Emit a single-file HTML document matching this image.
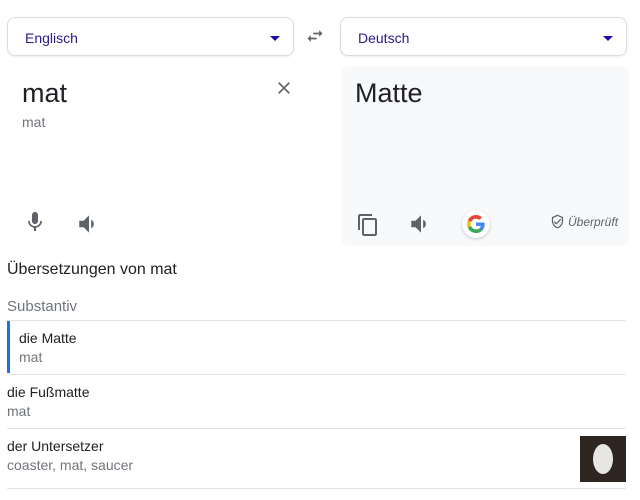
<!DOCTYPE html>
<html><head><meta charset="utf-8"><style>
*{margin:0;padding:0;box-sizing:border-box}
body{width:640px;height:500px;background:#fff;font-family:"Liberation Sans",Arial,sans-serif;position:relative;overflow:hidden;color:#202124}
.a{position:absolute}
.sel{position:absolute;top:17px;height:39px;border:1px solid #dadce0;border-radius:8px;box-shadow:0 1px 2px rgba(0,0,0,.08);font-size:14px;color:#2a1a8a;padding:12px 0 0 17px}
.tri{position:absolute;right:13px;top:18px;width:0;height:0;border-left:5px solid transparent;border-right:5px solid transparent;border-top:5px solid #1a0dab}
.line{position:absolute;left:7px;width:619px;height:1px;background:#e4e4e4}
.t1{font-size:14px;color:#202124}
.t2{font-size:14px;color:#70757a}
</style></head><body>
<div class="sel" style="left:7px;width:287px">Englisch<div class="tri"></div></div>
<div class="sel" style="left:340px;width:287px">Deutsch<div class="tri"></div></div>
<svg class="a" style="left:305px;top:26px" width="20" height="20" viewBox="0 0 24 24" fill="#5f6368"><path d="M6.99 11L3 15l3.99 4v-3H14v-2H6.99v-3zM21 9l-3.99-4v3H10v2h7.01v3L21 9z"/></svg>
<div class="a" style="left:22px;top:78px;font-size:27px;color:#202124">mat</div>
<div class="a t2" style="left:22px;top:114px">mat</div>
<svg class="a" style="left:274px;top:78px" width="20" height="20" viewBox="0 0 24 24" fill="#5f6368"><path d="M19 6.41L17.59 5 12 10.59 6.41 5 5 6.41 10.59 12 5 17.59 6.41 19 12 13.41 17.59 19 19 17.59 13.41 12z"/></svg>
<svg class="a" style="left:23px;top:210px" width="24" height="24" viewBox="0 0 24 24" fill="#5f6368"><path d="M12 14c1.66 0 3-1.34 3-3V5c0-1.66-1.34-3-3-3S9 3.34 9 5v6c0 1.66 1.34 3 3 3zm5.3-3c0 3-2.54 5.1-5.3 5.1S6.7 14 6.7 11H5c0 3.41 2.72 6.23 6 6.72V21h2v-3.28c3.28-.48 6-3.3 6-6.72h-1.7z"/></svg>
<svg class="a" style="left:76px;top:211px" width="26" height="26" viewBox="0 0 24 24" fill="#5f6368"><path d="M3 9v6h4l5 5V4L7 9H3zm13.5 3c0-1.77-1.02-3.29-2.5-4.03v8.05c1.48-.73 2.5-2.25 2.5-4.02z"/></svg>
<div class="a" style="left:341px;top:66px;width:288px;height:180px;background:#f8f9fa;border-radius:8px"></div>
<div class="a" style="left:355px;top:78px;font-size:27px;color:#202124">Matte</div>
<svg class="a" style="left:356px;top:213px" width="24" height="24" viewBox="0 0 24 24" fill="#5f6368"><path d="M16 1H4c-1.1 0-2 .9-2 2v14h2V3h12V1zm3 4H8c-1.1 0-2 .9-2 2v14c0 1.1.9 2 2 2h11c1.1 0 2-.9 2-2V7c0-1.1-.9-2-2-2zm0 16H8V7h11v14z"/></svg>
<svg class="a" style="left:408px;top:211px" width="26" height="26" viewBox="0 0 24 24" fill="#5f6368"><path d="M3 9v6h4l5 5V4L7 9H3zm13.5 3c0-1.77-1.02-3.29-2.5-4.03v8.05c1.48-.73 2.5-2.25 2.5-4.02z"/></svg>
<div class="a" style="left:462px;top:210px;width:28px;height:28px;border-radius:50%;background:#fff;box-shadow:0 1px 3px rgba(0,0,0,.2)"></div>
<svg class="a" style="left:467px;top:215px" width="18" height="18" viewBox="0 0 48 48"><path fill="#EA4335" d="M24 9.5c3.54 0 6.710 1.22 9.21 3.6l6.85-6.85C35.9 2.38 30.470 0 24 0 14.62 0 6.51 5.38 2.56 13.22l7.98 6.19C12.43 13.72 17.74 9.5 24 9.5z"/><path fill="#4285F4" d="M46.98 24.55c0-1.57-.15-3.09-.38-4.55H24v9.02h12.940c-.58 2.96-2.26 5.48-4.78 7.18l7.73 6c4.51-4.18 7.09-10.36 7.09-17.65z"/><path fill="#FBBC05" d="M10.53 28.59c-.48-1.45-.76-2.99-.76-4.59s.27-3.14.76-4.59l-7.98-6.19C.92 16.46 0 20.12 0 24c0 3.88.92 7.54 2.56 10.78l7.97-6.19z"/><path fill="#34A853" d="M24 48c6.48 0 11.930-2.13 15.89-5.81l-7.73-6c-2.15 1.45-4.92 2.3-8.16 2.3-6.26 0-11.57-4.22-13.47-9.91l-7.98 6.19C6.51 42.62 14.62 48 24 48z"/></svg>
<svg class="a" style="left:550px;top:214px" width="15" height="15" viewBox="0 0 24 24" fill="#5f6368"><path d="M12 1L3 5v6c0 5.55 3.84 10.74 9 12 5.16-1.26 9-6.45 9-12V5l-9-4zm7 10c0 4.52-2.98 8.69-7 9.930-4.02-1.24-7-5.41-7-9.93V6.3l7-3.11 7 3.11V11zm-11.59.59L6 13l4 4 8-8-1.41-1.42L10 14.17z"/></svg>
<div class="a" style="left:568px;top:215px;font-size:12px;font-style:italic;color:#5f6368">Überprüft</div>
<div class="a" style="left:7px;top:261px;font-size:16px;color:#202124">Übersetzungen von mat</div>
<div class="a" style="left:7px;top:298px;font-size:15px;color:#70757a">Substantiv</div>
<div class="line" style="top:320px"></div>
<div class="a" style="left:7px;top:321px;width:3px;height:52px;background:#1a73e8"></div>
<div class="a t1" style="left:19px;top:330px">die Matte</div>
<div class="a t2" style="left:19px;top:349px">mat</div>
<div class="line" style="top:374px"></div>
<div class="a t1" style="left:7px;top:384px">die Fußmatte</div>
<div class="a t2" style="left:7px;top:403px">mat</div>
<div class="line" style="top:428px"></div>
<div class="a t1" style="left:7px;top:438px">der Untersetzer</div>
<div class="a t2" style="left:7px;top:457px">coaster, mat, saucer</div>
<div class="a" style="left:580px;top:436px;width:46px;height:46px;background:#2e2420"><div class="a" style="left:13px;top:8px;width:20px;height:30px;border-radius:50%;background:#e8e6e3"></div></div>
<div class="line" style="top:488px"></div>
</body></html>
